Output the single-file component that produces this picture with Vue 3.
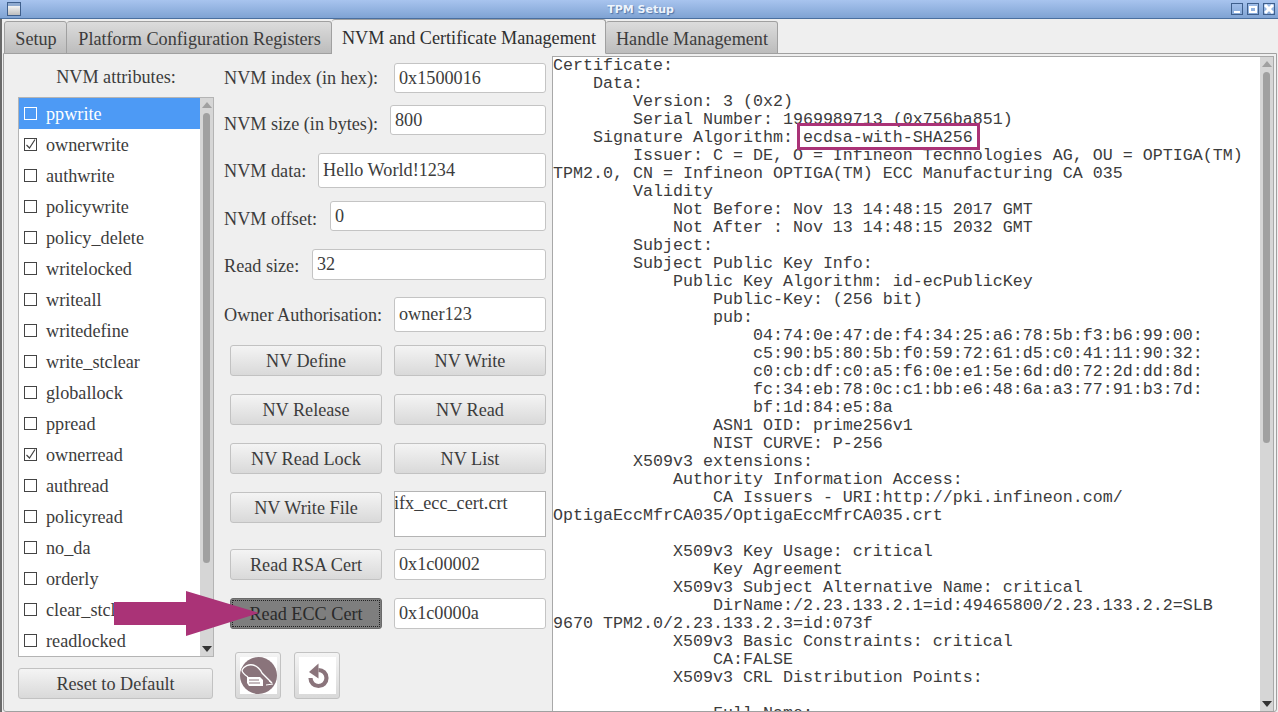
<template>
  <div class="window">
    <div class="titlebar">
      <span class="win-menu"></span>
      <span class="win-title">TPM Setup</span>
      <div class="win-buttons">
        <span class="win-btn"><i class="min"></i></span>
        <span class="win-btn"><i class="max"></i></span>
        <span class="win-btn">
          <svg width="10" height="10" viewBox="0 0 10 10"><path d="M1 1l8 8M9 1l-8 8" stroke="#fff" stroke-width="3" /></svg>
        </span>
      </div>
    </div>

    <div class="frame">
      <div class="tabs">
        <div
          v-for="tab in tabs"
          :key="tab"
          class="tab"
          :class="{ active: tab === activeTab }"
        >
          {{ tab }}
        </div>
      </div>

      <div class="panel">
        <div class="col-left">
          <div class="attr-title">NVM attributes:</div>
          <div class="attr-box">
            <ul class="attr-list">
              <li
                v-for="(attr, i) in attributes"
                :key="attr.name"
                :class="{ selected: i === 0 }"
              >
                <span class="check">
                  <svg v-if="attr.on" width="11" height="11" viewBox="0 0 11 11"><path d="M1.500 6l3 3L10 .5" fill="none" stroke="#444" stroke-width="1.200" /></svg>
                </span>
                <span>{{ attr.name }}</span>
              </li>
            </ul>
            <div class="scrollbar">
              <span class="arrow-up"></span>
              <span class="thumb list-thumb"></span>
              <span class="arrow-down"></span>
            </div>
          </div>
          <button class="btn reset">Reset to Default</button>
        </div>

        <div class="col-mid">
          <div v-for="f in fields" :key="f.label" class="field" :class="f.cls">
            <label>{{ f.label }}</label>
            <input type="text" :value="f.value" />
          </div>

          <div class="btn-row r1">
            <button class="btn">NV Define</button>
            <button class="btn">NV Write</button>
          </div>
          <div class="btn-row r2">
            <button class="btn">NV Release</button>
            <button class="btn">NV Read</button>
          </div>
          <div class="btn-row r3">
            <button class="btn">NV Read Lock</button>
            <button class="btn">NV List</button>
          </div>
          <div class="btn-row r4">
            <button class="btn">NV Write File</button>
            <div class="file-box">ifx_ecc_cert.crt</div>
          </div>
          <div class="btn-row r5">
            <button class="btn">Read RSA Cert</button>
            <input type="text" value="0x1c00002" />
          </div>
          <div class="btn-row r6">
            <button class="btn pressed">Read ECC Cert</button>
            <input type="text" value="0x1c0000a" />
          </div>
          <div class="icon-row">
            <button class="icon-btn">
              <svg width="37" height="37" viewBox="0 0 37 37">
                <circle cx="18.500" cy="18.500" r="18.500" fill="#8a747b" />
                <path d="M2 13c2-4 7-6 11-5 4 1 7 4 9 8l10 10" fill="none" stroke="#fff" stroke-width="1.300" />
                <path d="M2 13c0 3 3 5 6 7" fill="none" stroke="#fff" stroke-width="1.300" />
                <path d="M7 20h13l3 3v6H9l-2-3z" fill="#fff" />
                <path d="M9 23h10M9 26h11" stroke="#8a747b" stroke-width="1" />
                <path d="M26 28l7-1M29 24l3 2" stroke="#fff" stroke-width="1" />
              </svg>
            </button>
            <button class="icon-btn">
              <svg width="37" height="37" viewBox="0 0 37 37">
                <path d="M19.500 13a8 8 0 1 1-8 8" fill="none" stroke="#8a747b" stroke-width="4.200" />
                <path d="M19.500 6.500v15L10 15z" fill="#8a747b" />
              </svg>
            </button>
          </div>
        </div>

        <div class="col-right">
          <pre class="cert">{{ certText }}</pre>
          <div class="highlight"></div>
          <div class="scrollbar cert-scroll">
            <span class="arrow-up"></span>
            <span class="thumb cert-thumb"></span>
            <span class="arrow-down"></span>
          </div>
        </div>
      </div>
    </div>

    <svg class="big-arrow" width="145" height="46" viewBox="0 0 145 46">
      <path d="M0 11h72V0l73 22-73 23V34H0z" fill="#aa3377" />
    </svg>
  </div>
</template>

<script setup>
const tabs = [
  'Setup',
  'Platform Configuration Registers',
  'NVM and Certificate Management',
  'Handle Management',
]
const activeTab = 'NVM and Certificate Management'

const attributes = [
  { name: 'ppwrite' },
  { name: 'ownerwrite', on: true },
  { name: 'authwrite' },
  { name: 'policywrite' },
  { name: 'policy_delete' },
  { name: 'writelocked' },
  { name: 'writeall' },
  { name: 'writedefine' },
  { name: 'write_stclear' },
  { name: 'globallock' },
  { name: 'ppread' },
  { name: 'ownerread', on: true },
  { name: 'authread' },
  { name: 'policyread' },
  { name: 'no_da' },
  { name: 'orderly' },
  { name: 'clear_stclear' },
  { name: 'readlocked' },
]

const fields = [
  { label: 'NVM index (in hex):', value: '0x1500016', cls: 'f-index' },
  { label: 'NVM size (in bytes):', value: '800', cls: 'f-size' },
  { label: 'NVM data:', value: 'Hello World!1234', cls: 'f-data' },
  { label: 'NVM offset:', value: '0', cls: 'f-offset' },
  { label: 'Read size:', value: '32', cls: 'f-read' },
  { label: 'Owner Authorisation:', value: 'owner123', cls: 'f-owner' },
]

const certText = `Certificate:
    Data:
        Version: 3 (0x2)
        Serial Number: 1969989713 (0x756ba851)
    Signature Algorithm: ecdsa-with-SHA256
        Issuer: C = DE, O = Infineon Technologies AG, OU = OPTIGA(TM)
TPM2.0, CN = Infineon OPTIGA(TM) ECC Manufacturing CA 035
        Validity
            Not Before: Nov 13 14:48:15 2017 GMT
            Not After : Nov 13 14:48:15 2032 GMT
        Subject:
        Subject Public Key Info:
            Public Key Algorithm: id-ecPublicKey
                Public-Key: (256 bit)
                pub:
                    04:74:0e:47:de:f4:34:25:a6:78:5b:f3:b6:99:00:
                    c5:90:b5:80:5b:f0:59:72:61:d5:c0:41:11:90:32:
                    c0:cb:df:c0:a5:f6:0e:e1:5e:6d:d0:72:2d:dd:8d:
                    fc:34:eb:78:0c:c1:bb:e6:48:6a:a3:77:91:b3:7d:
                    bf:1d:84:e5:8a
                ASN1 OID: prime256v1
                NIST CURVE: P-256
        X509v3 extensions:
            Authority Information Access:
                CA Issuers - URI:http://pki.infineon.com/
OptigaEccMfrCA035/OptigaEccMfrCA035.crt

            X509v3 Key Usage: critical
                Key Agreement
            X509v3 Subject Alternative Name: critical
                DirName:/2.23.133.2.1=id:49465800/2.23.133.2.2=SLB
9670 TPM2.0/2.23.133.2.3=id:073f
            X509v3 Basic Constraints: critical
                CA:FALSE
            X509v3 CRL Distribution Points:

                Full Name:`
</script>

<style>
html, body {
  margin: 0;
  overflow: hidden;
}
</style>

<style scoped>
.window {
  position: relative;
  width: 1278px;
  height: 712px;
  display: flex;
  flex-direction: column;
  overflow: hidden;
  background: #efefef;
  font-family: "Liberation Serif", serif;
  font-size: 18.2px;
  color: #3c3c3c;
}

.titlebar {
  height: 19px;
  flex: none;
  display: flex;
  align-items: center;
  justify-content: space-between;
  position: relative;
  padding: 0 3px 0 7px;
  background: linear-gradient(#a8c4ee, #7fa3d3);
  border-bottom: 1px solid #4a6f9f;
  box-sizing: border-box;
}

.win-menu {
  width: 12px;
  height: 12px;
  border: 1px solid #3f5f8c;
  background: linear-gradient(#8faad0 0 3px, #f4f4f4 3px, #bdbdbd);
}

.win-title {
  position: absolute;
  left: 3px;
  right: 0;
  text-align: center;
  font-family: "DejaVu Sans", sans-serif;
  font-size: 11px;
  font-weight: bold;
  color: #eef4fc;
  text-shadow: 1px 1px 1px #4f75a8;
}

.win-buttons {
  display: flex;
  gap: 4px;
}

.win-btn {
  padding: 0;
  border: 1px solid #3f5f8c;
  display: flex;
  align-items: center;
  justify-content: center;
  width: 10px;
  height: 10px;
}

.win-btn .min {
  width: 6px;
  height: 2px;
  background: #fff;
  margin-top: 5px;
}

.win-btn .max {
  width: 4px;
  height: 3px;
  border: 2px solid #fff;
}

.frame {
  flex: 1;
  min-height: 0;
  display: flex;
  flex-direction: column;
  padding: 0 1px 0 3px;
  background: linear-gradient(90deg, #6a6a6a 0 2px, transparent 2px);
}

.tabs {
  height: 35px;
  flex: none;
  display: flex;
  align-items: flex-end;
  padding-left: 1px;
  margin-bottom: -1px;
  position: relative;
  z-index: 1;
}

.tab {
  height: 33px;
  box-sizing: border-box;
  padding: 7px 0 0 1px;
  text-align: center;
  white-space: nowrap;
  background: linear-gradient(#dcdcdc, #bcbcbc);
  border: 1px solid #a0a0a0;
  border-left-width: 0;
  border-radius: 3px 3px 0 0;
  line-height: 20px;
}

.tab:nth-child(1) { width: 63px; border-left-width: 1px; }
.tab:nth-child(2) { width: 265px; }
.tab:nth-child(3) { width: 274px; }
.tab:nth-child(4) { width: 172px; }

.tab.active {
  height: 35px;
  padding-top: 8px;
  background: #efefef;
  border-bottom-color: #efefef;
  color: #2e2e2e;
}

.panel {
  flex: 1;
  min-height: 0;
  display: flex;
  border: 1px solid #a0a0a0;
  border-radius: 0 0 3px 3px;
  padding: 0 2px 0 14px;
  overflow: hidden;
}

.col-left {
  width: 196px;
  flex: none;
  display: flex;
  flex-direction: column;
  margin-right: 10px;
}

.attr-title {
  height: 42px;
  line-height: 44px;
  text-align: center;
  margin-top: 1px;
  flex: none;
}

.attr-box {
  height: 560px;
  flex: none;
  box-sizing: border-box;
  border: 1px solid #b4b4b4;
  display: flex;
  background: #fff;
  overflow: hidden;
}

.attr-list {
  list-style: none;
  margin: 0;
  padding: 0;
  flex: 1;
  min-width: 0;
}

.attr-list li {
  height: 31px;
  display: flex;
  align-items: center;
  gap: 9px;
  padding-left: 5px;
  white-space: nowrap;
}

.attr-list li span:last-child {
  padding-top: 2px;
}

.attr-list li.selected {
  background: #4d9af5;
  color: #fff;
}

.check {
  width: 11px;
  height: 11px;
  flex: none;
  border: 1px solid #444;
  background: #fff;
  display: flex;
  align-items: center;
  justify-content: center;
}

.selected .check {
  border-color: #fff;
  background: transparent;
}

.scrollbar {
  width: 13px;
  flex: none;
  background: #d6d6d6;
  display: flex;
  flex-direction: column;
  align-items: center;
}

.arrow-up,
.arrow-down {
  width: 0;
  height: 0;
  flex: none;
  border-left: 5px solid transparent;
  border-right: 5px solid transparent;
}

.arrow-up {
  margin: 4px 0 5px;
  border-bottom: 6px solid #a0a0a0;
}

.arrow-down {
  margin: auto 0 4px;
  border-top: 6px solid #333;
}

.thumb {
  width: 7px;
  flex: none;
  border-radius: 4px;
  background: #a0a0a0;
}

.list-thumb {
  height: 450px;
}

.cert-thumb {
  height: 371px;
}

.col-mid {
  width: 322px;
  flex: none;
  margin-right: 6px;
  display: flex;
  flex-direction: column;
}

.field {
  display: flex;
  align-items: center;
  justify-content: space-between;
  height: 30px;
  flex: none;
}

.field label {
  white-space: nowrap;
  padding-top: 2px;
}

.field input {
  height: 100%;
}

.f-index { margin-top: 9px; }
.f-index label { padding-top: 0; }
.f-index input { width: 152px; }
.f-size { margin-top: 12px; }
.f-size label { padding-top: 8px; }
.f-size input { width: 156px; }
.f-data { margin-top: 18px; height: 35px; }
.f-data input { width: 228px; }
.f-offset { margin-top: 13px; }
.f-offset label { padding-top: 6px; }
.f-offset input { width: 216px; }
.f-read { margin-top: 18px; height: 31px; }
.f-read label { padding-top: 4px; }
.f-read input { width: 234px; }
.f-owner { margin-top: 17px; height: 35px; }
.f-owner input { width: 152px; }

input {
  box-sizing: border-box;
  border: 1px solid #c4c4c4;
  border-radius: 3px;
  background: #fff;
  padding: 0 4px;
  font: inherit;
  color: #3c3c3c;
  outline: none;
  margin: 0;
}

.btn {
  box-sizing: border-box;
  border: 1px solid #c2c2c2;
  border-radius: 3px;
  background: linear-gradient(#f4f4f4, #d9d9d9);
  font: inherit;
  color: #3c3c3c;
  padding: 2px 0 0;
  margin: 0;
}

.reset {
  width: 195px;
  height: 31px;
  margin-top: 11px;
  flex: none;
}

.btn-row {
  height: 31px;
  flex: none;
  display: grid;
  grid-template-columns: 152px 152px;
  column-gap: 12px;
  align-items: start;
  padding-left: 6px;
  box-sizing: border-box;
  width: 322px;
}

.btn-row .btn,
.btn-row input {
  width: 100%;
  height: 31px;
}

.r1 { margin-top: 13px; }
.r2 { margin-top: 18px; }
.r3 { margin-top: 18px; }
.r4 { margin-top: 18px; }
.r5 { margin-top: 26px; }
.r6 { margin-top: 18px; }

.file-box {
  box-sizing: border-box;
  height: 46px;
  margin-top: -1px;
  padding: 1px 0 0;
  border: 1px solid #b4b4b4;
  background: #fff;
  line-height: 20px;
  text-indent: -1px;
  overflow: hidden;
}

.pressed {
  background: #7e7e7e;
  border-color: #6a6a6a;
  outline: 1px dotted #222;
  outline-offset: -3px;
  color: #2a2a2a;
}

.icon-row {
  display: flex;
  gap: 13px;
  margin-top: 23px;
  padding-left: 11px;
}

.icon-btn {
  width: 46px;
  height: 47px;
  padding: 0;
  box-sizing: border-box;
  border: 1px solid #c2c2c2;
  border-radius: 3px;
  background: linear-gradient(#f4f4f4, #d9d9d9);
  display: flex;
  align-items: center;
  justify-content: center;
}

.icon-btn svg {
  background: #fff;
}

.col-right {
  flex: 1;
  min-width: 0;
  position: relative;
  display: flex;
  margin-top: 2px;
  border: 1px solid #a8a8a8;
  border-bottom: 0;
  background: #fff;
  overflow: hidden;
}

.cert {
  flex: 1;
  min-width: 0;
  margin: 0;
  padding: 0;
  font-family: "Liberation Mono", monospace;
  font-size: 16.67px;
  line-height: 18px;
  color: #3c3c3c;
  overflow: hidden;
}

.highlight {
  position: absolute;
  left: 244px;
  top: 66px;
  width: 183px;
  height: 27px;
  box-sizing: border-box;
  border: 3px solid #aa3377;
}

.big-arrow {
  position: absolute;
  left: 114px;
  top: 591px;
}
</style>
